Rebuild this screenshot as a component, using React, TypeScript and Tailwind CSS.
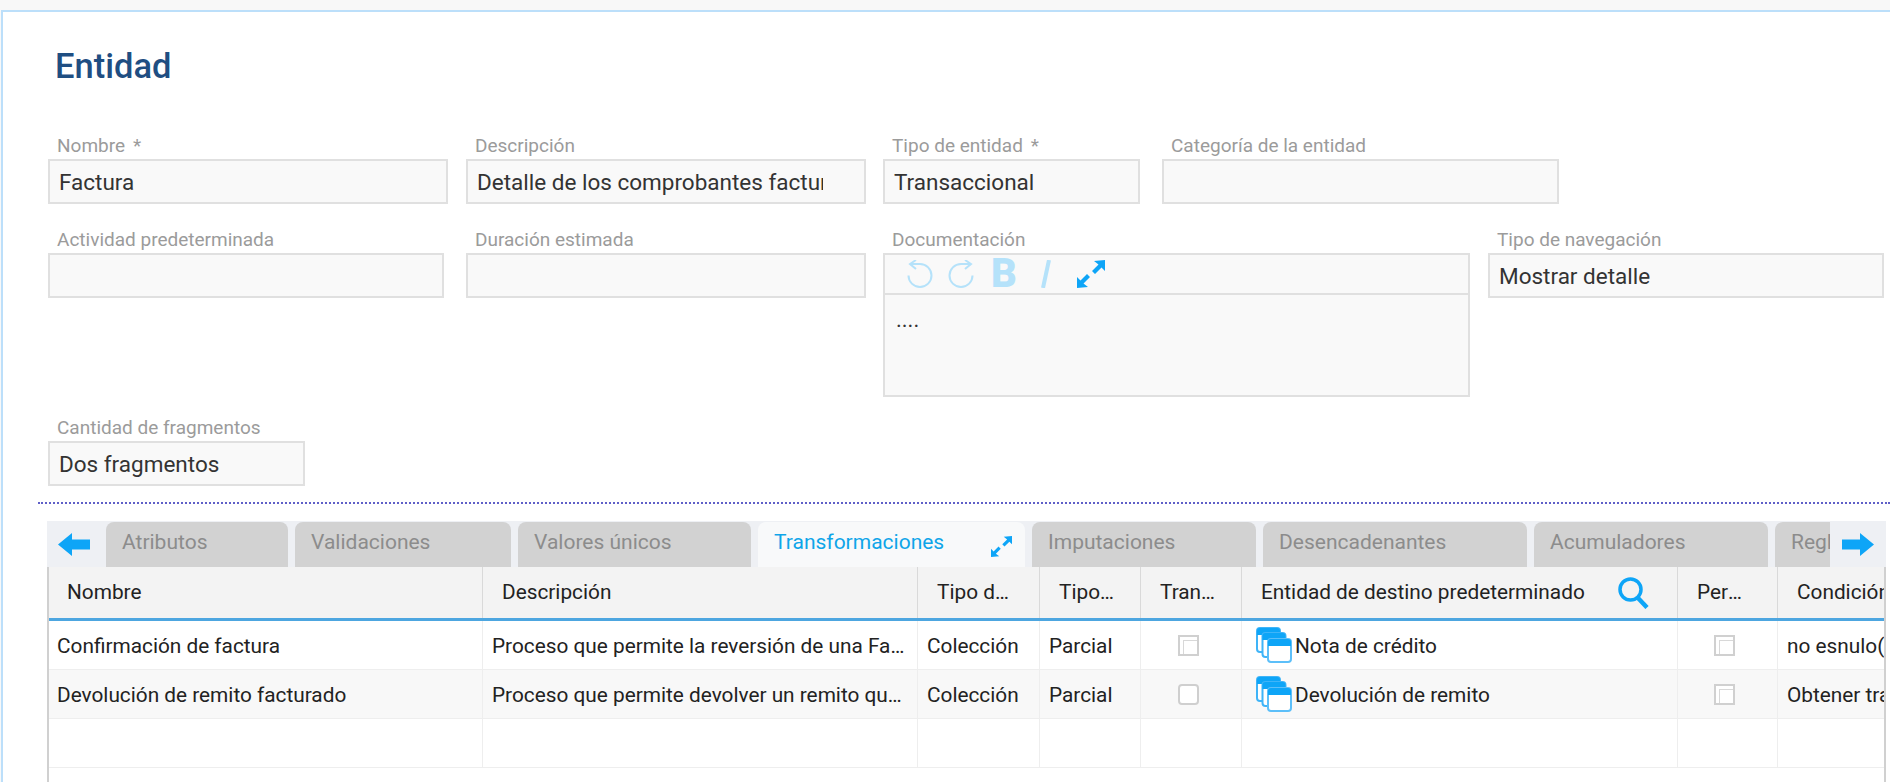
import type { ReactNode } from 'react';

function Field({ label, value, required, className }: { label: string; value?: string; required?: boolean; className: string }) {
  return (
    <div className={className}>
      <div className="h-[23px] pl-[9px] text-[19px] leading-[20px] text-[#9b9b9b] whitespace-nowrap">
        {label}
        {required && <span className="ml-2">*</span>}
      </div>
      <div className="h-[45px] border-2 border-[#e0e0e0] bg-[#f9f9f9] pl-[9px] text-[22.500px] leading-[42px] text-[#333]">
        <div className="w-[346px] max-w-full overflow-hidden whitespace-nowrap">{value}</div>
      </div>
    </div>
  );
}

function ExpandIcon({ size }: { size: number }) {
  return (
    <svg width={size} height={size} viewBox="0 0 28 28" fill="#0ea5f7">
      <path d="M28 0v11l-3.500-3.500-6.500 6.500-3-3 6.500-6.500L17 1z" />
      <path d="M0 28V17l3.500 3.500 6.500-6.500 3 3-6.500 6.500L11 27z" />
    </svg>
  );
}

function UndoIcon({ flip }: { flip?: boolean }) {
  return (
    <svg width="26" height="28" viewBox="0 0 26 28" fill="none" stroke="#b5e2fa" strokeWidth="2" className={flip ? '-scale-x-100' : ''}>
      <path d="M4 4h9a11.500 11.500 0 1 1-11.500 11.500" />
      <path d="M9 0 3 4l6 5" />
    </svg>
  );
}

function LeftArrow({ flip }: { flip?: boolean }) {
  return (
    <svg width="32" height="23" viewBox="0 0 32 23" fill="#0ea5f7" className={flip ? '-scale-x-100' : ''}>
      <path d="M0 11.500 14 0v6.500h18v10H14V23z" />
    </svg>
  );
}

function WindowsIcon() {
  return (
    <svg width="36" height="36" viewBox="0 0 36 36" className="shrink-0">
      <rect x="1" y="1" width="23" height="24" rx="3" fill="#fff" stroke="#3fb4f8" strokeWidth="2" />
      <path d="M1 8V4a3 3 0 0 1 3-3h17a3 3 0 0 1 3 3v4z" fill="#0ea5f7" />
      <rect x="6.500" y="6" width="23" height="24" rx="3" fill="#fff" stroke="#3fb4f8" strokeWidth="2" />
      <path d="M6.500 13V9a3 3 0 0 1 3-3h17a3 3 0 0 1 3 3v4z" fill="#0ea5f7" />
      <rect x="12" y="12" width="23" height="23" rx="3" fill="#fff" stroke="#5cbff9" strokeWidth="2" />
      <path d="M12 19v-4a3 3 0 0 1 3-3h17a3 3 0 0 1 3 3v4z" fill="#0ea5f7" />
    </svg>
  );
}

function SearchIcon() {
  return (
    <svg width="31" height="32" viewBox="0 0 31 32" fill="none" stroke="#0ea5f7" strokeWidth="3.500" className="shrink-0">
      <circle cx="12.500" cy="12.500" r="10.500" />
      <path d="M20 21l9 9.500" strokeWidth="4.500" />
    </svg>
  );
}

function Check({ rounded }: { rounded?: boolean }) {
  if (rounded) return <div className="h-[21px] w-[21px] rounded-[4px] border-2 border-[#cfcfcf] bg-white" />;
  return (
    <div className="h-[21px] w-[21px] overflow-hidden border-2 border-[#d0d0d0] bg-white">
      <div className="ml-[3px] mt-[3px] h-full w-full border-l border-t border-[#d8d8d8]" />
    </div>
  );
}

function Tab({ children, className }: { children: ReactNode; className: string }) {
  return (
    <div className={`h-[45px] shrink-0 rounded-t-[8px] bg-[#d2d2d2] pl-4 text-[21px] leading-[40px] text-[#8c8c8c] whitespace-nowrap overflow-hidden ${className}`}>
      {children}
    </div>
  );
}

const grid = 'grid grid-cols-[434px_435px_122px_101px_101px_436px_100px_300px]';
const head = 'h-[51px] border-r border-[#d9d9d9] pl-[19px] pr-6 text-[20.800px] leading-[51px] text-[#222] truncate';
const cell = 'h-[49px] border-r border-b border-[#eeeeee] pl-[9px] pr-[10px] text-[20.800px] leading-[50px] text-[#222] truncate';
const box = 'flex h-[49px] items-center justify-center border-r border-b border-[#eeeeee]';

function Row({ name, desc, kind, mode, entity, condition, rounded, striped, empty }: { name?: string; desc?: string; kind?: string; mode?: string; entity?: string; condition?: string; rounded?: boolean; striped?: boolean; empty?: boolean }) {
  return (
    <div className={`${grid} ${striped ? 'bg-[#f8f8f8]' : 'bg-white'}`}>
      <div className={`${cell} !pl-[8px]`}>{name}</div>
      <div className={cell}>{desc}</div>
      <div className={cell}>{kind}</div>
      <div className={cell}>{mode}</div>
      <div className={`${box} pr-[6px]`}>{!empty && <Check rounded={rounded} />}</div>
      <div className={`${box} !justify-start gap-[3px] pl-[14px] text-[20.800px] text-[#222]`}>
        {!empty && <WindowsIcon />}
        <span className="pt-[3px]">{entity}</span>
      </div>
      <div className={`${box} pr-[6px]`}>{!empty && <Check />}</div>
      <div className={`${cell} !border-r-0`}>{condition}</div>
    </div>
  );
}

export default function App() {
  return (
    <div className="h-[782px] w-[1890px] overflow-hidden bg-[#f8f8f8] pl-[1px] pt-[10px] font-['Roboto',sans-serif]">
      <div className="h-[772px] border-l-2 border-t-2 border-[#bcdffa] bg-white">
        <div className="h-[124px] pl-[52px] pt-[32px] text-[34.500px] font-medium leading-[44px] text-[#1f4e82]">Entidad</div>

        <div className="flex items-start pl-[45px]">
          <Field label="Nombre" required value="Factura" className="w-[400px]" />
          <Field label="Descripción" value="Detalle de los comprobantes facturados" className="ml-[18px] w-[400px]" />
          <Field label="Tipo de entidad" required value="Transaccional" className="ml-[17px] w-[257px]" />
          <Field label="Categoría de la entidad" className="ml-[22px] w-[397px]" />
        </div>

        <div className="mt-[26px] flex items-start pl-[45px]">
          <Field label="Actividad predeterminada" className="w-[396px]" />
          <Field label="Duración estimada" className="ml-[22px] w-[400px]" />
          <div className="ml-[17px] w-[587px]">
            <div className="h-[23px] pl-[9px] text-[19px] leading-[20px] text-[#9b9b9b]">Documentación</div>
            <div className="h-[144px] border-2 border-[#e0e0e0] bg-[#f9f9f9]">
              <div className="flex h-[40px] items-center border-b-2 border-[#e0e0e0] pl-[22px]">
                <UndoIcon />
                <div className="ml-[15px]"><UndoIcon flip /></div>
                <span className="ml-[17px] text-[40px] font-black leading-[36px] text-[#b5e2fa]">B</span>
                <svg width="12" height="28" viewBox="0 0 12 28" className="ml-[23px]" stroke="#b5e2fa" strokeWidth="4">
                  <path d="M9 0 3 28" />
                </svg>
                <div className="ml-[25px]"><ExpandIcon size={28} /></div>
              </div>
              <div className="pl-[11px] pt-[13px] text-[22px] leading-[24px] text-[#333]">....</div>
            </div>
          </div>
          <Field label="Tipo de navegación" value="Mostrar detalle" className="ml-[18px] w-[396px]" />
        </div>

        <div className="mt-[21px] pl-[45px]">
          <Field label="Cantidad de fragmentos" value="Dos fragmentos" className="w-[257px]" />
        </div>

        <div className="ml-[35px] mt-[16px] border-t-2 border-dotted border-[#6060c8]" />

        <div className="ml-[44px] mt-[17px] h-[46px] w-[1839px] flex bg-[#eef0f4] pt-px">
          <div className="flex h-[45px] w-[59px] shrink-0 items-center pl-[11px]"><LeftArrow /></div>
          <div className="flex min-w-0 flex-1 gap-[7px] overflow-hidden">
            <Tab className="w-[182px]">Atributos</Tab>
            <Tab className="w-[216px]">Validaciones</Tab>
            <Tab className="w-[233px]">Valores únicos</Tab>
            <div className="flex h-[48px] w-[267px] shrink-0 rounded-t-[8px] bg-[#f8f9fa] pl-4 text-[21px] leading-[40px] text-[#0ea5e9]">
              <span>Transformaciones</span>
              <div className="ml-[47px] mt-[14px]"><ExpandIcon size={21} /></div>
            </div>
            <Tab className="w-[224px]">Imputaciones</Tab>
            <Tab className="w-[264px]">Desencadenantes</Tab>
            <Tab className="w-[234px]">Acumuladores</Tab>
            <Tab className="w-[160px]">Reglas</Tab>
          </div>
          <div className="flex h-[45px] w-[56px] shrink-0 items-center pl-[12px]"><LeftArrow flip /></div>
        </div>

        <div className="ml-[44px] h-[216px] w-[1839px] overflow-hidden border-x-2 border-[#d0d0d0] bg-white">
          <div className={`${grid} border-b-[3px] border-[#4da6e0] bg-[#f3f3f3]`}>
            <div className={`${head} !pl-[18px]`}>Nombre</div>
            <div className={head}>Descripción</div>
            <div className={head}>Tipo de transformación</div>
            <div className={head}>Tipo de imputación</div>
            <div className={head}>Transaccional</div>
            <div className={`${head} flex items-center justify-between !pr-[28px]`}>
              <span>Entidad de destino predeterminado</span>
              <SearchIcon />
            </div>
            <div className={head}>Permite edición</div>
            <div className={`${head} !border-r-0`}>Condición de la transformación</div>
          </div>
          <Row name="Confirmación de factura" desc="Proceso que permite la reversión de una Factura confirmada" kind="Colección" mode="Parcial" entity="Nota de crédito" condition="no esnulo(Factura)" />
          <Row striped rounded name="Devolución de remito facturado" desc="Proceso que permite devolver un remito que fue facturado" kind="Colección" mode="Parcial" entity="Devolución de remito" condition="Obtener transacción" />
          <Row empty />
        </div>
      </div>
    </div>
  );
}
